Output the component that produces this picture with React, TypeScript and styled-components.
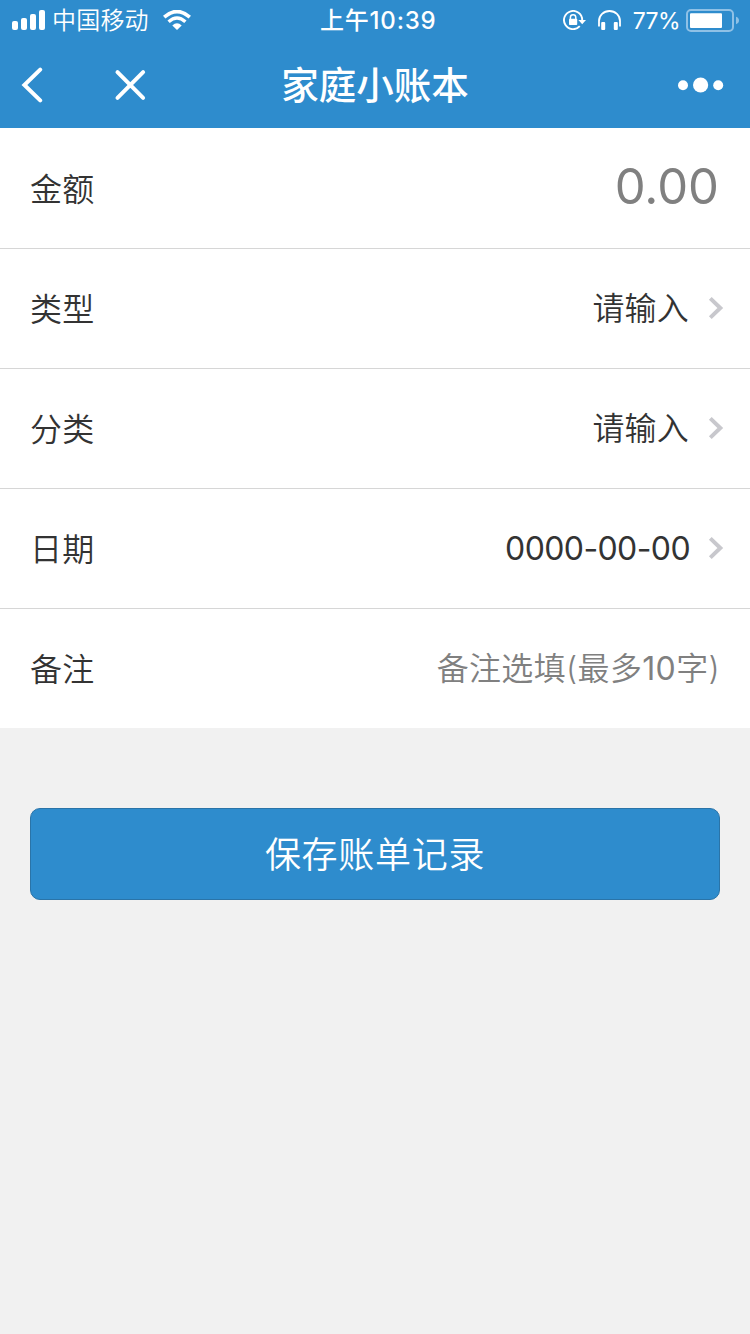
import React from "react";
import styled, { createGlobalStyle } from "styled-components";

const GlobalStyle = createGlobalStyle`
  * { box-sizing: border-box; }
  body {
    margin: 0;
    background: #f1f1f1;
    font-family: Inter, "Noto Sans CJK SC", sans-serif;
    font-weight: 350;
    color: #333;
  }
`;

const Page = styled.div`
  width: 750px;
  min-height: 1334px;
  background: #f1f1f1;
`;

const Header = styled.header`
  height: 128px;
  background: #2e8ccd;
  color: #fff;
`;

const StatusBar = styled.div`
  height: 40px;
  display: grid;
  grid-template-columns: 308px 140px 1fr;
  align-items: center;
  padding: 0 11px 0 12px;
  font-size: 24px;
  line-height: 38px;
`;

const StatusGroup = styled.div<{ $end?: boolean }>`
  display: flex;
  align-items: center;
  height: 40px;
  justify-content: ${(p) => (p.$end ? "flex-end" : "flex-start")};
`;

const Carrier = styled.span`
  margin: 0 14px 0 7px;
  padding-top: 2px;
  letter-spacing: 0.2px;
`;

const Clock = styled.span`
  padding-top: 2px;
  font-weight: 500;
  font-size: 24px;
  letter-spacing: 0.8px;
  white-space: nowrap;
`;

const Percent = styled.span`
  margin: 0 6px 0 12px;
  padding-top: 1px;
  font-size: 23px;
  font-weight: 400;
  letter-spacing: -0.6px;
`;

const NavBar = styled.nav`
  height: 88px;
  display: grid;
  grid-template-columns: 240px 1fr 240px;
  align-items: center;
`;

const NavActions = styled.div<{ $end?: boolean }>`
  display: flex;
  align-items: center;
  gap: 70px;
  padding: 1px 26px 0 20px;
  justify-content: ${(p) => (p.$end ? "flex-end" : "flex-start")};
`;

const IconButton = styled.button`
  display: flex;
  padding: 0;
  border: 0;
  background: none;
  color: inherit;
`;

const Title = styled.h1`
  margin: 0;
  padding-top: 3px;
  font-size: 37.5px;
  font-weight: 500;
  line-height: 85px;
  text-align: center;
`;

const Form = styled.section`
  background: #fff;
`;

const Row = styled.div`
  display: flex;
  align-items: center;
  justify-content: space-between;
  height: 120px;
  padding: 0 30px;
  font-size: 32px;
  line-height: 48px;

  & + & {
    border-top: 1px solid #d6d6d6;
  }
`;

const Label = styled.span`
  padding-top: 3px;
  letter-spacing: 0.2px;
`;

const Value = styled.span<{ $muted?: boolean; $tracking?: number }>`
  display: flex;
  align-items: center;
  color: ${(p) => (p.$muted ? "#808080" : "#333")};
  letter-spacing: ${(p) => p.$tracking ?? 0}px;
`;

const DateValue = styled(Value)`
  font-weight: 400;
`;

const Amount = styled(Value)`
  padding: 0 1px 3px 0;
  font-size: 49px;
  font-weight: 400;
`;

const Digits = styled.span`
  font-weight: 400;
`;

const Chevron = styled.svg<{ $gap: number }>`
  margin: 0 -5px 2px ${(p) => p.$gap}px;
`;

const Actions = styled.div`
  padding: 80px 30px 0;
`;

const SaveButton = styled.button`
  display: block;
  width: 100%;
  height: 92px;
  padding: 1px 0 0;
  border: 1px solid #2a74a8;
  border-radius: 10px;
  background: #2e8ccd;
  color: #fff;
  font: 350 36px/88px Inter, "Noto Sans CJK SC", sans-serif;
  letter-spacing: 0.7px;
`;

const SignalIcon = () => (
  <svg width="33" height="20" viewBox="0 0 33 20" fill="currentColor">
    <rect x="0" y="11" width="6" height="9" rx="2" />
    <rect x="9" y="8" width="6" height="12" rx="2" />
    <rect x="18" y="4" width="6" height="16" rx="2" />
    <rect x="27" y="0" width="6" height="20" rx="2" />
  </svg>
);

const WifiIcon = () => (
  <svg width="28" height="20" viewBox="0 0 28 20" fill="none" stroke="currentColor">
    <path d="M1.2 7.2Q14-4.2 26.8 7.2" strokeWidth="3.6" />
    <path d="M5.6 11.8Q14 4.2 22.4 11.8" strokeWidth="3.4" />
    <path d="M9.3 15.4Q14 11 18.7 15.4L14 20Z" fill="currentColor" stroke="none" />
  </svg>
);

const RotationLockIcon = () => (
  <svg width="23" height="20" viewBox="0 0 23 20" fill="none" stroke="currentColor" strokeWidth="1.9">
    <path d="M19.2 10A9.1 9.1 0 1 0 16.8 16.2" />
    <path d="M15.4 10H23L19.2 14.2Z" fill="currentColor" stroke="none" />
    <path d="M7.4 9V7.4a2.7 2.7 0 0 1 5.4 0V9" strokeWidth="1.5" />
    <rect x="6" y="8.8" width="8.2" height="6.2" rx="0.8" fill="currentColor" stroke="none" />
  </svg>
);

const HeadphonesIcon = () => (
  <svg width="23" height="20" viewBox="0 0 23 20">
    <path
      d="M1 16.5V11A10.5 10 0 0 1 22 11V16.5"
      fill="none"
      stroke="currentColor"
      strokeWidth="1.8"
    />
    <rect x="3.2" y="12" width="4" height="8" rx="1" fill="currentColor" />
    <rect x="15.8" y="12" width="4" height="8" rx="1" fill="currentColor" />
  </svg>
);

const Headphones = styled.span`
  display: flex;
  margin-left: 12px;
`;

const BatteryIcon = () => (
  <svg width="53" height="24" viewBox="0 0 53 24">
    <rect x="1" y="2" width="46" height="21" rx="4" fill="none" stroke="#8fc1e6" strokeWidth="2" />
    <rect x="4" y="5.2" width="32" height="14.8" rx="1" fill="#fff" />
    <path d="M50 8.8v7.4q3-1 3-3.7t-3-3.7Z" fill="#8fc1e6" />
  </svg>
);

const BackIcon = () => (
  <svg width="24" height="36" viewBox="0 0 24 36" fill="none" stroke="currentColor" strokeWidth="4" strokeLinecap="round">
    <path d="M20.2 2.6L4.4 18L20.2 33.4" />
  </svg>
);

const CloseIcon = () => (
  <svg width="32" height="32" viewBox="0 0 32 32" fill="none" stroke="currentColor" strokeWidth="4" strokeLinecap="round">
    <path d="M3.5 3.2L29.1 28.8M29.1 3.2L3.5 28.8" />
  </svg>
);

const MoreIcon = () => (
  <svg width="46" height="16" viewBox="0 0 46 16" fill="currentColor">
    <circle cx="5" cy="8.2" r="5" />
    <circle cx="22.6" cy="8" r="7.6" />
    <circle cx="40.2" cy="8.2" r="5" />
  </svg>
);

const Arrow = ({ gap = 18 }: { gap?: number }) => (
  <Chevron $gap={gap} width="17" height="24" viewBox="0 0 17 24" fill="none" stroke="#c8c8cd" strokeWidth="4">
    <path d="M2.3 2.4L12.3 12L2.3 21.6" />
  </Chevron>
);

export default function App() {
  return (
    <Page>
      <GlobalStyle />
      <Header>
        <StatusBar>
          <StatusGroup>
            <SignalIcon />
            <Carrier>中国移动</Carrier>
            <WifiIcon />
          </StatusGroup>
          <Clock>上午10:39</Clock>
          <StatusGroup $end>
            <RotationLockIcon />
            <Headphones>
              <HeadphonesIcon />
            </Headphones>
            <Percent>77%</Percent>
            <BatteryIcon />
          </StatusGroup>
        </StatusBar>
        <NavBar>
          <NavActions>
            <IconButton aria-label="返回">
              <BackIcon />
            </IconButton>
            <IconButton aria-label="关闭">
              <CloseIcon />
            </IconButton>
          </NavActions>
          <Title>家庭小账本</Title>
          <NavActions $end>
            <IconButton aria-label="更多">
              <MoreIcon />
            </IconButton>
          </NavActions>
        </NavBar>
      </Header>
      <Form>
        <Row>
          <Label>金额</Label>
          <Amount $muted>0.00</Amount>
        </Row>
        <Row>
          <Label>类型</Label>
          <Value $tracking={0.2}>请输入<Arrow gap={19} /></Value>
        </Row>
        <Row>
          <Label>分类</Label>
          <Value $tracking={0.2}>请输入<Arrow gap={19} /></Value>
        </Row>
        <Row>
          <Label>日期</Label>
          <DateValue $tracking={-0.6}>0000-00-00<Arrow /></DateValue>
        </Row>
        <Row>
          <Label>备注</Label>
          <Value $muted $tracking={0.35}>
            备注选填(最多<Digits>10</Digits>字)
          </Value>
        </Row>
      </Form>
      <Actions>
        <SaveButton>保存账单记录</SaveButton>
      </Actions>
    </Page>
  );
}
